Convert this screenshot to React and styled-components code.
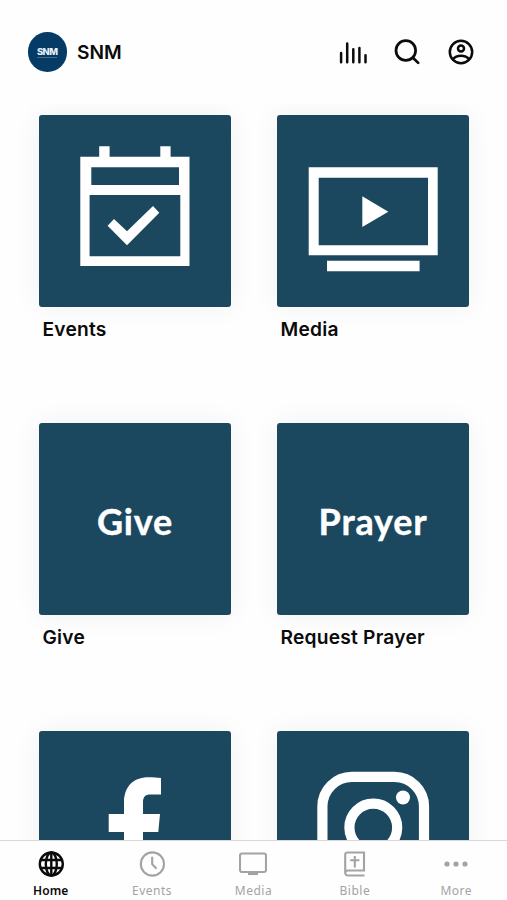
import React from "react";
import styled, { createGlobalStyle } from "styled-components";

const colors = {
  tile: "#1b485f",
  avatar: "#063b66",
  black: "#0b0b0b",
  grey: "#a3a3a3"
};

const GlobalStyle = createGlobalStyle`
  * {
    box-sizing: border-box;
  }
  body {
    margin: 0;
    background: #fefefe;
    font-family: Inter, "Liberation Sans", sans-serif;
    color: ${colors.black};
  }
`;

const Screen = styled.div`
  display: flex;
  flex-direction: column;
  height: 900px;
  overflow: hidden;
`;

const Header = styled.header`
  display: flex;
  align-items: center;
  flex: 0 0 104px;
  padding: 0 32.5px 0 27.5px;
`;

const Avatar = styled.div`
  display: flex;
  flex-direction: column;
  align-items: center;
  justify-content: center;
  width: 39.5px;
  height: 39.5px;
  border-radius: 50%;
  background: ${colors.avatar};
  color: #e6f3f8;
  font-size: 9.3px;
  font-weight: 800;
  line-height: 9px;
  letter-spacing: -0.5px;
  &::after {
    content: "";
    width: 20px;
    height: 1px;
    margin-top: 1px;
    background: rgba(255, 255, 255, 0.25);
  }
`;

const Title = styled.h1`
  flex: 1;
  margin: 0 0 0 10px;
  font-size: 19.2px;
  font-weight: 600;
  line-height: 24px;
`;

const Actions = styled.div`
  display: flex;
  gap: 26px;
`;

const IconButton = styled.button`
  display: flex;
  padding: 0;
  border: 0;
  background: transparent;
  color: inherit;
  cursor: pointer;
`;

const Content = styled.main`
  flex: 1;
  min-height: 0;
  overflow: hidden;
  padding: 11px 38px 0 39px;
`;

const Grid = styled.div`
  display: grid;
  grid-template-columns: 192px 192px;
  grid-auto-rows: 308px;
  column-gap: 46px;
`;

const Tile = styled.div`
  display: flex;
  align-items: center;
  justify-content: center;
  width: 192px;
  height: 192px;
  border-radius: 3px;
  background: ${colors.tile};
  box-shadow: 0 0 28px rgba(0, 0, 0, 0.06);
`;

const TileText = styled.span`
  margin-top: 4px;
  color: #fff;
  font-family: Lato, sans-serif;
  font-size: 36px;
  font-weight: 700;
  line-height: 44px;
  letter-spacing: 0.8px;
  -webkit-text-stroke: 0.4px #fff;
`;

const Label = styled.div`
  padding-left: 3.5px;
  margin-top: 10px;
  font-size: 19.2px;
  font-weight: 600;
  line-height: 25px;
  letter-spacing: 0.22px;
`;

const TabBar = styled.nav`
  display: grid;
  grid-template-columns: repeat(5, 1fr);
  flex: 0 0 60px;
  border-top: 1px solid #d9d9d9;
  background: #fefefe;
`;

const Tab = styled.button`
  display: flex;
  flex-direction: column;
  align-items: center;
  padding: 8.5px 0 0;
  border: 0;
  background: transparent;
  font-family: "Noto Sans", sans-serif;
  font-size: 12px;
  font-weight: ${props => (props.$active ? 600 : 400)};
  line-height: 16px;
  letter-spacing: ${props => (props.$active ? "0.1px" : "0.5px")};
  color: ${props => (props.$active ? colors.black : colors.grey)};
  cursor: pointer;
`;

const TabLabel = styled.span`
  margin-top: 5.5px;
`;

const BarsIcon = () => (
  <svg width="28" height="28" viewBox="0 0 28 28" stroke="currentColor" strokeWidth="2.5" strokeLinecap="round">
    <path d="M2.1 15v9.2M8.200 5.600v18.600M14.300 11.300v12.900M20.400 10v14.200M26.500 17.200v7" />
  </svg>
);

const SearchIcon = () => (
  <svg width="28" height="28" viewBox="0 0 28 28" fill="none" stroke="currentColor" strokeWidth="2.7" strokeLinecap="round">
    <circle cx="12.800" cy="12.500" r="9.800" />
    <path d="M19.900 19.700l5.300 5.200" />
  </svg>
);

const UserIcon = () => (
  <svg width="28" height="28" viewBox="0 0 28 28" fill="none" stroke="currentColor" strokeWidth="2.5">
    <circle cx="14" cy="14" r="11.200" />
    <circle cx="14" cy="10.400" r="3" />
    <path d="M5.900 21.300c1.800-2.300 4.800-3.500 8.100-3.500s6.300 1.200 8.100 3.500" />
  </svg>
);

const CalendarArt = () => (
  <svg width="192" height="192" viewBox="0 0 192 192" fill="#fff">
    <path d="M60.2 31.300h10.400v11H60.200zM121.300 31.300h10.300v11h-10.300z" />
    <path
      fillRule="evenodd"
      d="M41.300 41.800h109.200v109.200H41.300zM52.300 52.300v17.800H140V52.300zM50.600 80v61.300h90.700V80z"
    />
    <path d="M68.600 110.700l6.400-6.700 13 12.200L114 91l6.300 6.800L88 130.300z" />
  </svg>
);

const ScreenArt = () => (
  <svg width="192" height="192" viewBox="0 0 192 192" fill="#fff">
    <path fillRule="evenodd" d="M31.700 52.300h129v88h-129zM41.700 62.700v67.600H151V62.700z" />
    <path d="M50 145.800h92.600v10.400H50z" />
    <path d="M85.300 81.300l26 15.400-26 15.400z" />
  </svg>
);

const FacebookArt = () => (
  <svg width="192" height="192" viewBox="0 0 192 192" fill="#fff">
    <path d="M122 46.900v16.600h-10.500c-5.500 0-7.500 2.600-7.500 7.800v11.800h17l-1.700 18H104V160H85v-58.900H69.700v-18H85V71.500c0-16 9.500-25.200 24.500-25.200 4.500 0 9 .3 12.500.6z" />
  </svg>
);

const InstagramArt = () => (
  <svg width="192" height="192" viewBox="0 0 192 192" fill="none" stroke="#fff" strokeWidth="10.200">
    <rect x="45.400" y="45.900" width="101.600" height="101.600" rx="29.500" />
    <circle cx="96.300" cy="96.500" r="23.900" />
    <circle cx="126" cy="66.500" r="7" fill="#fff" stroke="none" />
  </svg>
);

const GlobeIcon = () => (
  <svg width="28" height="28" viewBox="0 0 28 28" fill="none" stroke="currentColor" strokeWidth="2.400">
    <circle cx="14.300" cy="14" r="11.500" />
    <ellipse cx="14.300" cy="14" rx="5.500" ry="11.500" />
    <path d="M14.300 2.500v23M3.800 10h21M3.800 18h21" />
  </svg>
);

const ClockIcon = () => (
  <svg width="28" height="28" viewBox="0 0 28 28" fill="none" stroke="currentColor" strokeWidth="2.100">
    <circle cx="14.400" cy="14" r="11.600" />
    <path d="M14.200 6.800v7.400l4.300 4.600" />
  </svg>
);

const TvIcon = () => (
  <svg width="28" height="28" viewBox="0 0 28 28" fill="none" stroke="currentColor" strokeWidth="2.100">
    <rect x="1" y="3.500" width="26" height="18.500" rx="2" />
    <path d="M9 24h10" />
  </svg>
);

const BibleIcon = () => (
  <svg width="28" height="28" viewBox="0 0 28 28" fill="none" stroke="currentColor" strokeWidth="2.100">
    <path d="M23.500 25.500H7a2.800 2.800 0 0 1-2.800-2.800V4.500A2 2 0 0 1 6.200 2.500h16.800v18H7a2.600 2.600 0 0 0-2.600 2" />
    <path d="M13.800 6v11.500M9.200 10.300h9.200" />
  </svg>
);

const MoreIcon = () => (
  <svg width="28" height="28" viewBox="0 0 28 28" fill="currentColor">
    <circle cx="5" cy="14" r="2.600" />
    <circle cx="14" cy="14" r="2.600" />
    <circle cx="23" cy="14" r="2.600" />
  </svg>
);

const tiles = [
  { id: "events", label: "Events", art: <CalendarArt /> },
  { id: "media", label: "Media", art: <ScreenArt /> },
  { id: "give", label: "Give", art: <TileText>Give</TileText> },
  { id: "prayer", label: "Request Prayer", art: <TileText>Prayer</TileText> },
  { id: "facebook", art: <FacebookArt /> },
  { id: "instagram", art: <InstagramArt /> }
];

const tabs = [
  { label: "Home", Icon: GlobeIcon },
  { label: "Events", Icon: ClockIcon },
  { label: "Media", Icon: TvIcon },
  { label: "Bible", Icon: BibleIcon },
  { label: "More", Icon: MoreIcon }
];

const App = () => (
  <Screen>
    <GlobalStyle />
    <Header>
      <Avatar>SNM</Avatar>
      <Title>SNM</Title>
      <Actions>
        <IconButton>
          <BarsIcon />
        </IconButton>
        <IconButton>
          <SearchIcon />
        </IconButton>
        <IconButton>
          <UserIcon />
        </IconButton>
      </Actions>
    </Header>
    <Content>
      <Grid>
        {tiles.map(({ id, label, art }) => (
          <div key={id}>
            <Tile>{art}</Tile>
            {label && <Label>{label}</Label>}
          </div>
        ))}
      </Grid>
    </Content>
    <TabBar>
      {tabs.map(({ label, Icon }, i) => (
        <Tab key={label} $active={i === 0}>
          <Icon />
          <TabLabel>{label}</TabLabel>
        </Tab>
      ))}
    </TabBar>
  </Screen>
);

export default App;
